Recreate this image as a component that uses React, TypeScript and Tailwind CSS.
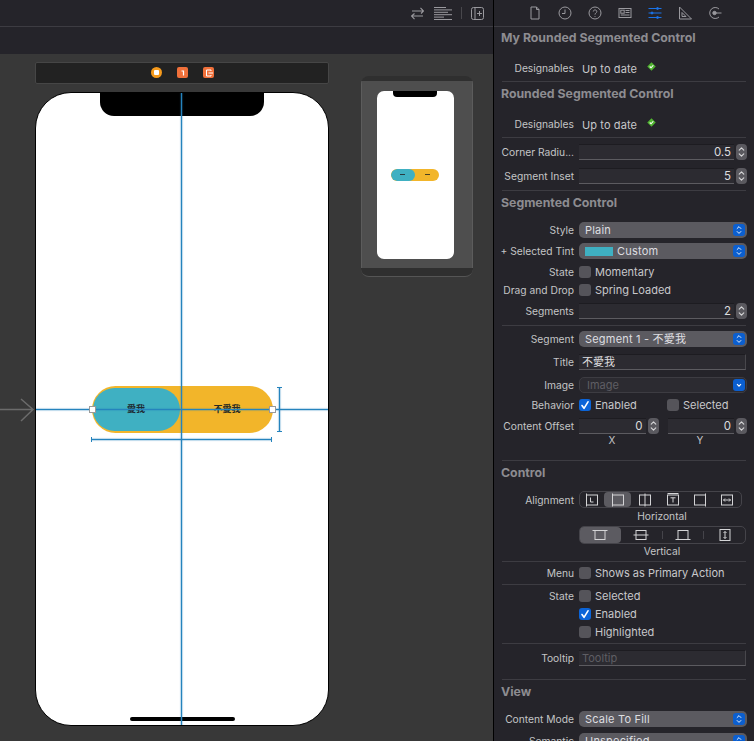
import React from "react";

const FONT = "font-['Inter','Noto_Sans_CJK_TC',sans-serif]";

function Chevrons({ className = "" }: { className?: string }) {
  return (
    <svg viewBox="0 0 12 16" className={className} fill="none" stroke="currentColor" strokeWidth="1.2" strokeLinecap="round" strokeLinejoin="round">
      <path d="M3.5 6 L6 3.5 L8.5 6" />
      <path d="M3.5 10 L6 12.5 L8.5 10" />
    </svg>
  );
}

function Stepper() {
  return (
    <div className="w-[11px] h-[16px] ml-[2px] shrink-0 rounded-[4px] bg-[#5a595f] text-[#d8d8da] flex flex-col">
      <Chevrons className="w-[11px] h-[16px]" />
    </div>
  );
}

function Label({ children }: { children?: React.ReactNode }) {
  return <div className="w-[80px] shrink-0 text-right text-[10.25px] leading-[14px] text-[#c4c4c6] whitespace-nowrap">{children}</div>;
}

function Row({ mt, label, children }: { mt: string; label?: React.ReactNode; children?: React.ReactNode }) {
  return (
    <div className={`${mt} h-[16px] flex items-center`}>
      <Label>{label}</Label>
      <div className="ml-[5px] w-[168px] flex items-center">{children}</div>
    </div>
  );
}

function Input({ value }: { value: string }) {
  return (
    <div className="flex-1 h-[16px] bg-[#2c2b31] border-b border-b-[#5c5b60] border-t border-t-[#1d1c21] text-right pr-[3px] text-[11.5px] leading-[14px] text-[#dcdcde]">{value}</div>
  );
}

function Select({ value, swatch }: { value: string; swatch?: boolean }) {
  return (
    <div className="flex-1 h-[16px] rounded-[5px] bg-[#5b5a60] flex items-center pl-[6px] pr-[2px]">
      {swatch && <div className="w-[28px] h-[9px] bg-[#3fb0c2] mr-[4px]" />}
      <span className="flex-1 text-[11px] leading-[14px] text-[#dedee0] tracking-[0.2px] whitespace-nowrap">{value}</span>
      <div className="w-[12px] h-[12px] rounded-[3px] bg-[#0b5fd0] text-white flex items-center justify-center">
        <Chevrons className="w-[10px] h-[12px]" />
      </div>
    </div>
  );
}

function Check({ on, label }: { on?: boolean; label: string }) {
  return (
    <div className="flex items-center">
      <div className={`w-[12px] h-[12px] rounded-[3px] flex items-center justify-center ${on ? "bg-[#0b64d8]" : "bg-[#55545a]"}`}>
        {on && (
          <svg viewBox="0 0 12 12" className="w-[12px] h-[12px]" fill="none" stroke="white" strokeWidth="1.6" strokeLinecap="round" strokeLinejoin="round">
            <path d="M3 6.5 L5 9.3 L9 2.8" />
          </svg>
        )}
      </div>
      <span className="ml-[4px] text-[11px] leading-[14px] text-[#c8c8ca] whitespace-nowrap">{label}</span>
    </div>
  );
}

function Divider({ mt }: { mt: string }) {
  return <div className={`${mt} h-px ml-[8px] mr-[8px] bg-[#3d3c42]`} />;
}

function Heading({ mt, children }: { mt: string; children: React.ReactNode }) {
  return <div className={`${mt} h-[16px] pl-[7px] pt-px flex items-center text-[12.3px] font-bold text-[#8d8c91] whitespace-nowrap`}>{children}</div>;
}

function Designables({ mt }: { mt: string }) {
  return (
    <div className={`${mt} h-[16px] flex items-center`}>
      <Label>Designables</Label>
      <span className="ml-[8px] pt-px text-[11px] leading-[14px] text-[#c8c8ca] tracking-[0.1px] whitespace-nowrap">Up to date</span>
      <svg viewBox="0 0 10 10" className="ml-[10px] -mt-[3px] w-[9px] h-[9px]">
        <path d="M5 0.3 L9.7 5 L5 9.7 L0.3 5 Z" fill="#4fb32f" />
        <path d="M3 5 L4.5 6.4 L7 3.6" fill="none" stroke="white" strokeWidth="1.2" />
      </svg>
    </div>
  );
}

function AlignIcon({ kind }: { kind: string }) {
  const s = { fill: "none", stroke: "#d4d4d6", strokeWidth: 1 };
  return (
    <svg viewBox="0 0 16 14" className="w-[16px] h-[14px]" {...s}>
      {kind === "L" && <><path d="M2.5 0.5 V13.5" /><rect x="2.5" y="2" width="11" height="10" /><path d="M6.5 4.5 V9 H9.5" /></>}
      {kind === "start" && <><path d="M2.5 0.5 V13.5" /><rect x="2.5" y="2" width="11" height="10" /></>}
      {kind === "center" && <><path d="M8 0.5 V13.5" /><rect x="2.5" y="2" width="11" height="10" /></>}
      {kind === "T" && <><rect x="2.5" y="2" width="11" height="10" /><path d="M5.5 4.8 H10.5 M8 4.8 V9.5" /><path d="M2.5 .5 H13.5" /></>}
      {kind === "end" && <><path d="M13.5 0.5 V13.5" /><rect x="2.5" y="2" width="11" height="10" /></>}
      {kind === "fill" && <><rect x="2.5" y="2" width="11" height="10" /><path d="M4.5 7 H11.5 M6 5.5 L4.5 7 L6 8.5 M10 5.5 L11.5 7 L10 8.5" /></>}
      {kind === "vtop" && <><path d="M0.5 2.5 H15.5" /><rect x="3" y="2.5" width="10" height="9" /></>}
      {kind === "vcenter" && <><path d="M0.5 7 H15.5" /><rect x="3" y="2.5" width="10" height="9" /></>}
      {kind === "vbottom" && <><path d="M0.5 11.5 H15.5" /><rect x="3" y="2.5" width="10" height="9" /></>}
      {kind === "vfill" && <><rect x="3" y="1.5" width="10" height="11" /><path d="M8 3.5 V10.5 M6.5 5 L8 3.5 L9.5 5 M6.5 9 L8 10.5 L9.5 9" /></>}
    </svg>
  );
}

function TopIcon({ children, active }: { children: React.ReactNode; active?: boolean }) {
  return (
    <svg viewBox="0 0 14 14" className="w-[14px] h-[14px]" fill="none" stroke={active ? "#1a73e8" : "#9a999e"} strokeWidth="1">
      {children}
    </svg>
  );
}

function Inspector() {
  return (
    <div className="w-[260px] shrink-0 h-full overflow-hidden bg-[#25242a]">
      <div className="h-[26px] flex items-center pl-[34px] gap-[16px]">
        <TopIcon><path d="M3 1 H8.5 L11 3.5 V13 H3 Z M8.5 1 V3.5 H11" /></TopIcon>
        <TopIcon><circle cx="7" cy="7" r="6" /><path d="M7 3.5 V7.5 H4" /></TopIcon>
        <TopIcon><circle cx="7" cy="7" r="6" /><path d="M5.3 5.5 C5.3 3.4 8.8 3.4 8.8 5.5 C8.8 7 7 7 7 8.6 M7 10 V10.8" /></TopIcon>
        <TopIcon><rect x="1" y="2.5" width="12" height="9" /><rect x="2.8" y="4.2" width="3.4" height="3" /><path d="M7.5 4.5 H11.5 M7.5 6.5 H11.5 M2.8 9 H11.5" /></TopIcon>
        <TopIcon active><path d="M0.5 2.5 H13.5 M0.5 7 H13.5 M0.5 11.5 H13.5" /><circle cx="9.5" cy="2.5" r="1" fill="#1a73e8" /><circle cx="4" cy="7" r="1" fill="#1a73e8" /><circle cx="9.5" cy="11.5" r="1" fill="#1a73e8" /></TopIcon>
        <TopIcon><path d="M1.5 1 V13 H13.5 Z" /><path d="M4 6.5 V10.5 H8 Z" /></TopIcon>
        <TopIcon><path d="M11 3 A5.5 5.5 0 1 0 11 11" /><circle cx="6.5" cy="7" r="1.7" fill="#9a999e" /><path d="M8 7 H13.5" /></TopIcon>
      </div>
      <div className="h-px bg-[#3d3c42]" />
      <Heading mt="mt-[3px]">My Rounded Segmented Control</Heading>
      <Designables mt="mt-[14px]" />
      <Divider mt="mt-[5px]" />
      <Heading mt="mt-[4px]">Rounded Segmented Control</Heading>
      <Designables mt="mt-[14px]" />
      <Divider mt="mt-[5px]" />
      <Row mt="mt-[6px]" label="Corner Radiu..."><Input value="0.5" /><Stepper /></Row>
      <Row mt="mt-[8px]" label="Segment Inset"><Input value="5" /><Stepper /></Row>
      <Divider mt="mt-[6px]" />
      <Heading mt="mt-[4px]">Segmented Control</Heading>
      <Row mt="mt-[11px]" label="Style"><Select value="Plain" /></Row>
      <Row mt="mt-[5px]" label="+ Selected Tint"><Select value="Custom" swatch /></Row>
      <Row mt="mt-[5px]" label="State"><Check label="Momentary" /></Row>
      <Row mt="mt-[2px]" label="Drag and Drop"><Check label="Spring Loaded" /></Row>
      <Row mt="mt-[5px]" label="Segments"><Input value="2" /><Stepper /></Row>
      <Divider mt="mt-[6px]" />
      <Row mt="mt-[5px]" label="Segment"><Select value="Segment 1 - 不愛我" /></Row>
      <Row mt="mt-[7px]" label="Title">
        <div className="w-[167px] h-[16px] bg-[#2c2b31] border-b border-r border-b-[#5c5b60] border-r-[#48474c] border-t border-t-[#1d1c21] pl-[3px] text-[11px] leading-[14px] text-[#dcdcde]">不愛我</div>
      </Row>
      <Row mt="mt-[7px]" label="Image">
        <div className="flex-1 h-[16px] rounded-[5px] bg-[#2c2b31] border border-[#3d3c42] flex items-center pl-[7px] pr-[1px]">
          <span className="flex-1 text-[11px] leading-[14px] text-[#5f5e64]">Image</span>
          <div className="w-[12px] h-[12px] rounded-[3px] bg-[#0b5fd0] flex items-center justify-center">
            <svg viewBox="0 0 10 10" className="w-[8px] h-[8px]" fill="none" stroke="white" strokeWidth="1.4"><path d="M2.5 4 L5 6.5 L7.5 4" /></svg>
          </div>
        </div>
      </Row>
      <Row mt="mt-[4px]" label="Behavior">
        <div className="w-[88px]"><Check on label="Enabled" /></div>
        <Check label="Selected" />
      </Row>
      <Row mt="mt-[5px]" label="Content Offset">
        <Input value="0" /><Stepper />
        <div className="w-[9px] shrink-0" />
        <Input value="0" /><Stepper />
      </Row>
      <div className="h-[12px] flex items-center text-[10px] text-[#c4c4c6]">
        <div className="w-[85px]" />
        <div className="w-[66px] text-center">X</div>
        <div className="w-[22px]" />
        <div className="w-[66px] text-center">Y</div>
      </div>
      <Divider mt="mt-[14px]" />
      <Heading mt="mt-[4px]">Control</Heading>
      <div className="mt-[10px] h-[17px] flex items-center">
        <Label>Alignment</Label>
        <div className="ml-[5px] w-[163px] h-[17px] rounded-[5px] border border-[#45444a] flex items-center">
          {["L", "start", "center", "T", "end", "fill"].map((k, i) => (
            <div key={k} className={`h-full flex items-center justify-center ${i === 0 ? "w-[24px]" : "flex-1"} ${i === 1 ? "bg-[#5c5b61] rounded-[4px]" : ""}`}>
              <AlignIcon kind={k} />
            </div>
          ))}
        </div>
      </div>
      <div className="mt-[3px] h-[12px] flex items-center">
        <div className="w-[85px]" /><div className="w-[166px] text-center text-[10.25px] text-[#c4c4c6]">Horizontal</div>
      </div>
      <div className="mt-[3px] h-[18px] flex items-center">
        <div className="w-[85px]" />
        <div className="w-[167px] h-[18px] rounded-[5px] border border-[#45444a] flex items-center">
          {["vtop", "vcenter", "vbottom", "vfill"].map((k, i) => (
            <React.Fragment key={k}>
              {i >= 2 && <div className="w-px h-[8px] bg-[#45444a]" />}
              <div className={`flex-1 h-full flex items-center justify-center ${i === 0 ? "bg-[#5c5b61] rounded-[4px]" : ""}`}>
                <AlignIcon kind={k} />
              </div>
            </React.Fragment>
          ))}
        </div>
      </div>
      <div className="mt-[2px] h-[12px] flex items-center">
        <div className="w-[85px]" /><div className="w-[166px] text-center text-[10.25px] text-[#c4c4c6]">Vertical</div>
      </div>
      <Divider mt="mt-[3px]" />
      <Row mt="mt-[3px]" label="Menu"><Check label="Shows as Primary Action" /></Row>
      <Divider mt="mt-[3px]" />
      <Row mt="mt-[3px]" label="State"><Check label="Selected" /></Row>
      <Row mt="mt-[2px]"><Check on label="Enabled" /></Row>
      <Row mt="mt-[2px]"><Check label="Highlighted" /></Row>
      <Divider mt="mt-[3px]" />
      <Row mt="mt-[6px]" label="Tooltip">
        <div className="w-[167px] h-[16px] bg-[#2c2b31] border-b border-r border-b-[#5c5b60] border-r-[#48474c] border-t border-t-[#1d1c21] pl-[3px] text-[11px] leading-[14px] text-[#5f5e64]">Tooltip</div>
      </Row>
      <Divider mt="mt-[13px]" />
      <Heading mt="mt-[4px]">View</Heading>
      <Row mt="mt-[11px]" label="Content Mode"><Select value="Scale To Fill" /></Row>
      <Row mt="mt-[6px]" label="Semantic"><Select value="Unspecified" /></Row>
    </div>
  );
}

function Canvas() {
  return (
    <div className="relative flex-1 bg-[#383838] overflow-hidden">
      {/* canvas origin is y = 54 */}
      <div className="absolute left-[35px] top-[8px] w-[294px] h-[22px] rounded-[2px] bg-[#222222] border border-[#464646] flex items-center">
        <div className="absolute left-[115px] top-[4px] w-[11px] h-[11px] rounded-full bg-[#f59a1c] flex items-center justify-center">
          <div className="w-[5px] h-[5px] bg-white rounded-[1px]" />
        </div>
        <div className="absolute left-[141px] top-[4px] w-[11px] h-[11px] rounded-[2px] bg-[#f0703a] flex items-center justify-center">
          <svg viewBox="0 0 8 8" className="w-[8px] h-[8px]" fill="none" stroke="white" strokeWidth="1.2"><path d="M2.5 2 H4.5 V6.5" /></svg>
        </div>
        <div className="absolute left-[167px] top-[4px] w-[11px] h-[11px] rounded-[2px] bg-[#f0703a] flex items-center justify-center">
          <svg viewBox="0 0 10 10" className="w-[10px] h-[10px]" fill="none" stroke="white" strokeWidth="1"><path d="M7 3 V2 H2.5 V8 H7 V7 M4.5 5 H9" /></svg>
        </div>
      </div>

      {/* phone */}
      <div className="absolute left-[35px] top-[38px] w-[294px] h-[634px] rounded-[36px] bg-white border border-black overflow-hidden">
        <div className="absolute left-[64px] top-0 w-[164px] h-[23px] bg-black rounded-b-[14px]" />
        <div className="absolute left-[94px] top-[624px] w-[105px] h-[4px] rounded-full bg-black" />
        <div className="absolute left-[56px] top-[293px] w-[181px] h-[47px] rounded-full bg-[#f2b52a] overflow-hidden">
          <div className="absolute left-[1px] top-[2px] w-[87px] h-[43px] rounded-full bg-[#3fb0c2]" />
          <span className="absolute left-0 top-[16px] w-[88px] text-center text-[9px] leading-[14px] font-bold text-[#1f2a30]">愛我</span>
          <span className="absolute left-[90px] top-[16px] w-[90px] text-center text-[9px] leading-[14px] font-bold text-[#2a2a20]">不愛我</span>
        </div>
        <div className="absolute left-[145px] top-0 w-px h-full bg-[#2583bd] shadow-[0_0_1px_0.5px_rgba(37,131,189,0.55)]" />
        <div className="absolute left-0 top-[316px] w-full h-px bg-[#2583bd] shadow-[0_0_1px_0.5px_rgba(37,131,189,0.55)]" />
        <div className="absolute left-[53px] top-[313px] w-[7px] h-[7px] bg-white border border-[#9a9a9a]" />
        <div className="absolute left-[233px] top-[313px] w-[7px] h-[7px] bg-white border border-[#9a9a9a]" />
        <div className="absolute left-[241px] top-[294px] w-[5px] h-[45px] border-y border-[#2583bd]">
          <div className="mx-auto w-px h-full bg-[#2583bd] shadow-[0_0_1px_0.5px_rgba(37,131,189,0.55)]" />
        </div>
        <div className="absolute left-[55px] top-[344px] w-[181px] h-[5px] border-x border-[#2583bd] flex items-center">
          <div className="w-full h-px bg-[#2583bd] shadow-[0_0_1px_0.5px_rgba(37,131,189,0.55)]" />
        </div>
      </div>

      {/* incoming arrow */}
      <svg viewBox="0 0 36 24" className="absolute left-0 top-[344px] w-[36px] h-[24px]" fill="none" stroke="#6b6b6b" strokeWidth="1.5">
        <path d="M0 11.5 H33 M21 1 L33 11.5 L21 23" />
      </svg>

      {/* minimap scene */}
      <div className="absolute left-[361px] top-[22px] w-[112px] h-[201px] rounded-[8px] bg-[#2f2f2f] overflow-hidden flex flex-col border-b border-[#555555]">
        <div className="h-[5px]" />
        <div className="flex-1 bg-[#4e4e4e] flex pl-[15px] border-x border-[#5c5c5c]">
          <div className="relative mt-[10px] w-[77px] h-[168px] rounded-[7px] bg-white overflow-hidden">
            <div className="absolute left-[16px] top-0 w-[44px] h-[6px] bg-black rounded-b-[4px]" />
            <div className="absolute left-[14px] top-[78px] w-[48px] h-[12px] rounded-full bg-[#f2b52a] overflow-hidden">
              <div className="w-[24px] h-[12px] rounded-full bg-[#3fb0c2]" />
              <div className="absolute left-[9px] top-[5px] w-[5px] h-px bg-[#2a3a40]" />
              <div className="absolute left-[34px] top-[5px] w-[5px] h-px bg-[#4a4020]" />
            </div>
          </div>
        </div>
        <div className="h-[8px]" />
      </div>
    </div>
  );
}

export default function App() {
  return (
    <div className={`w-[754px] h-[741px] flex overflow-hidden bg-[#25242a] ${FONT}`}>
      <div className="w-[493px] shrink-0 flex flex-col">
        <div className="h-[26px] flex items-center justify-end bg-[#25242a] pr-[9px] text-[#9a999e]">
          <svg viewBox="0 0 13 13" className="w-[13px] h-[13px] mr-[10px]" fill="none" stroke="currentColor" strokeWidth="1.1">
            <path d="M1 4 H12 M9.5 0.8 L12.5 4 L10 6.5 M12 9 H1 M3.5 6.5 L0.5 9 L3.5 12.2" />
          </svg>
          <svg viewBox="0 0 18 13" className="w-[18px] h-[13px] mr-[9px]" fill="none" stroke="currentColor" strokeWidth="1">
            <path d="M0 0.5 H12 M0 2.9 H18 M0 5.3 H14 M0 7.7 H18 M0 10.1 H10 M0 12.5 H18" />
          </svg>
          <div className="w-px h-[12px] bg-[#48474c] mr-[9px]" />
          <svg viewBox="0 0 13 13" className="w-[13px] h-[13px]" fill="none" stroke="currentColor" strokeWidth="1">
            <rect x="0.5" y="0.5" width="12" height="12" rx="2" />
            <path d="M4 0.5 V12.5 M8.5 4 V9 M6 6.5 H11" />
          </svg>
        </div>
        <div className="h-px bg-[#3d3c42]" />
        <div className="h-[27px] bg-[#25242a]" />
        <Canvas />
      </div>
      <div className="w-px shrink-0 bg-black" />
      <Inspector />
    </div>
  );
}
